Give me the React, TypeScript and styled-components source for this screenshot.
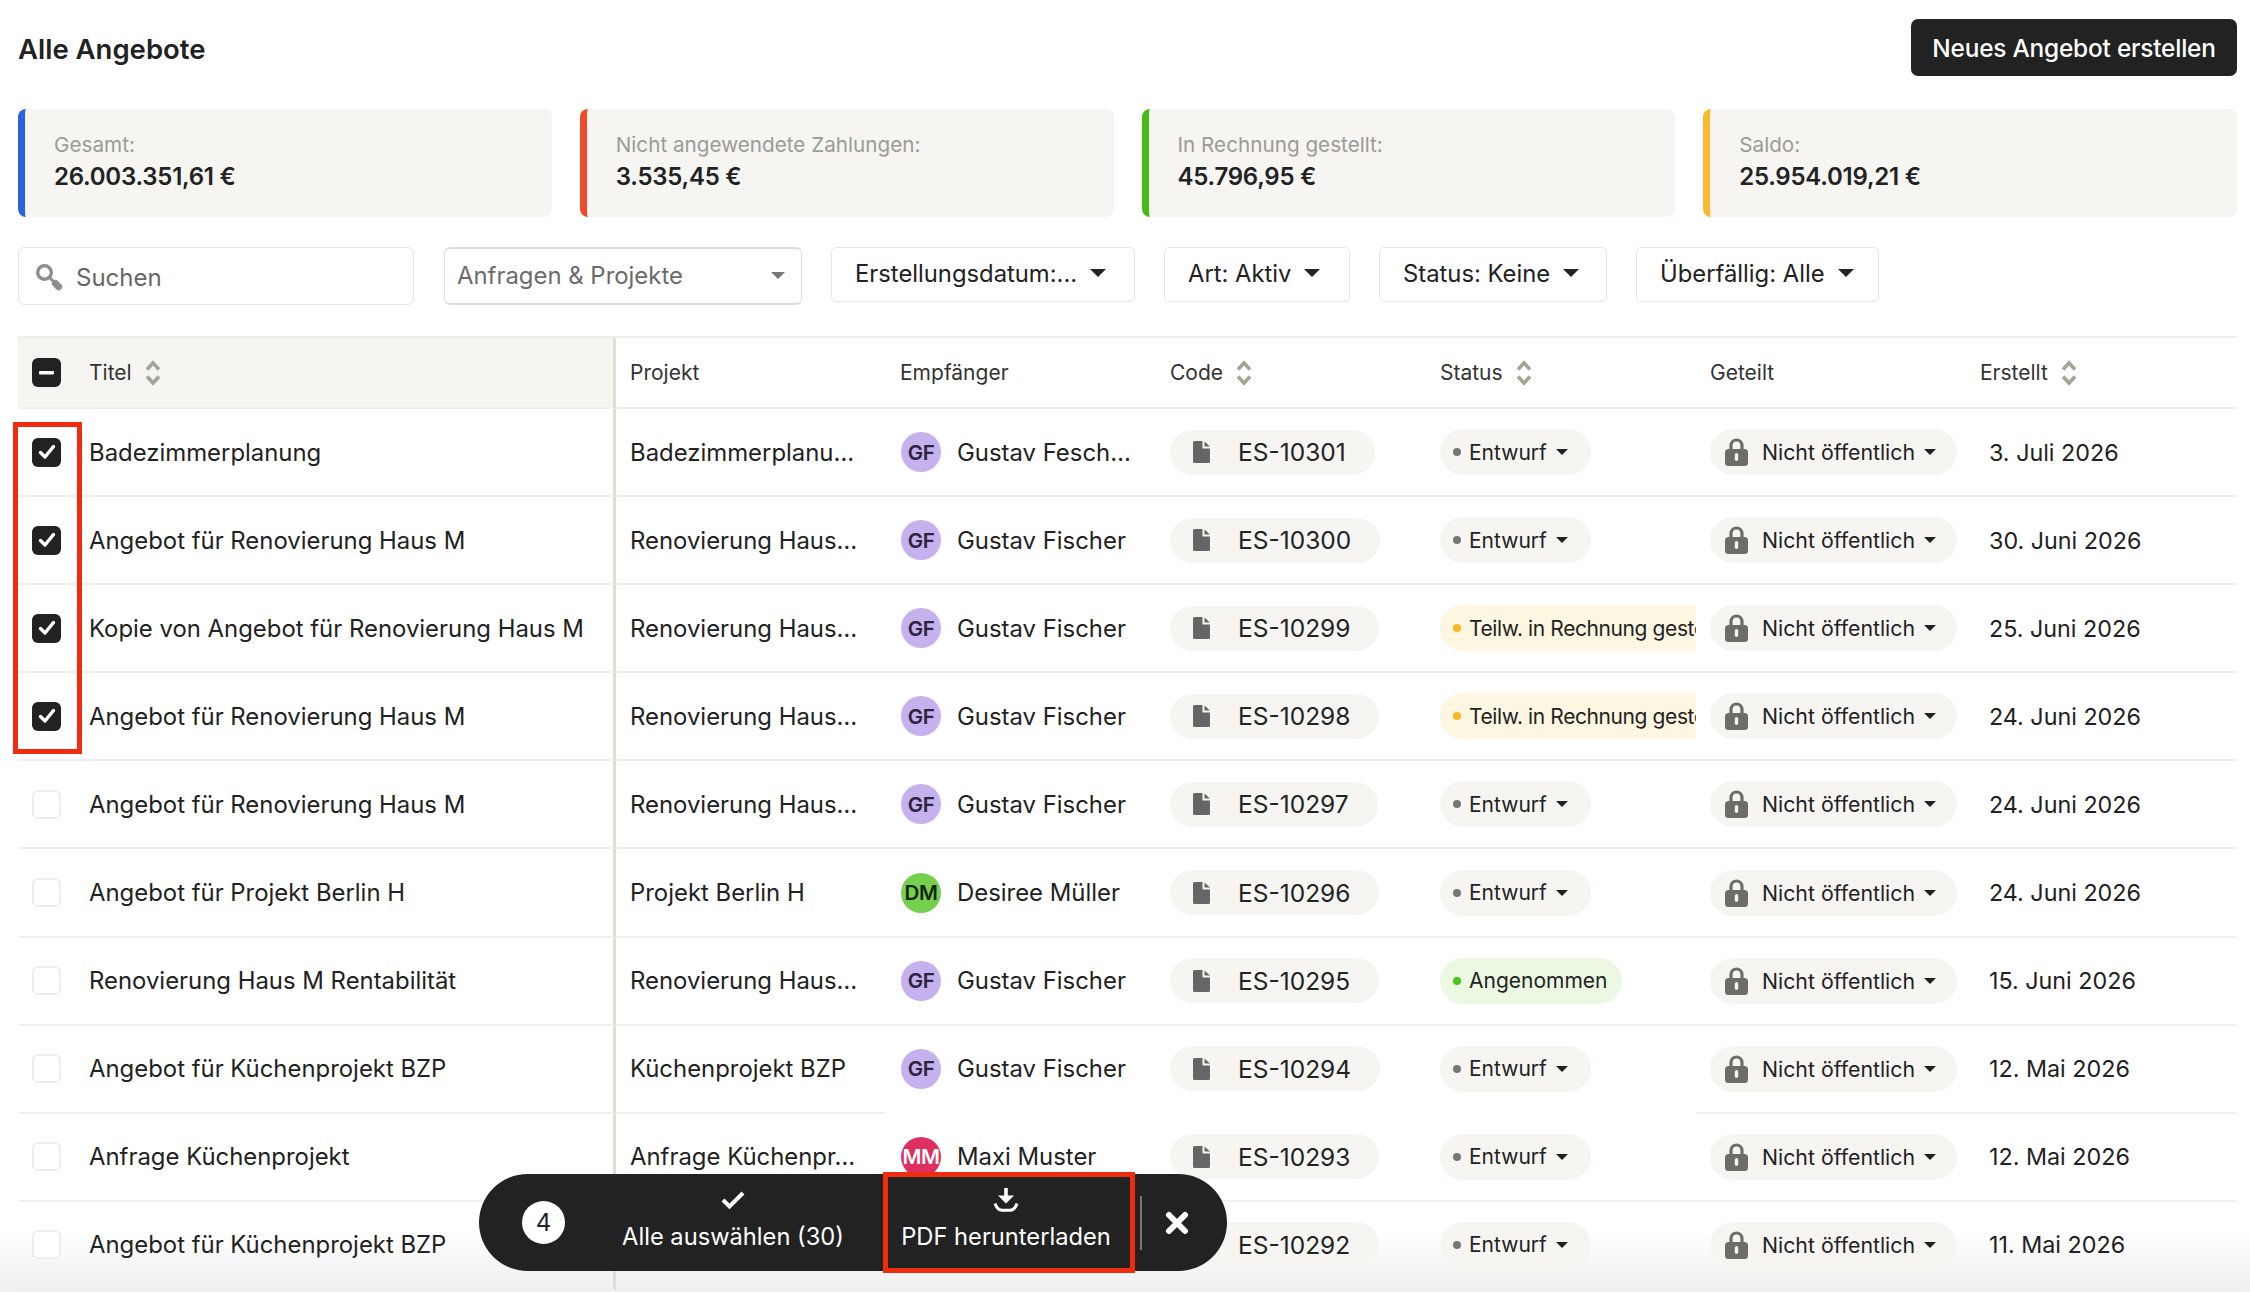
import React, { FC } from 'react'
import styled, { createGlobalStyle } from 'styled-components'

const GlobalStyle = createGlobalStyle`
  html, body {
    margin: 0;
    height: 1292px;
    overflow: hidden;
    background: #fff;
    font-family: 'Inter', 'Liberation Sans', sans-serif;
    color: #222;
  }
`

const Page = styled.div`
  position: relative;
  width: 2250px;
  height: 1292px;
  padding: 19px 13px 0 18px;
  box-sizing: border-box;
  overflow: hidden;
`
const Header = styled.header`
  display: flex;
  justify-content: space-between;
  align-items: center;
  height: 57px;
`
const Title = styled.h1`
  margin: 0;
  padding-top: 3px;
  font-size: 27.5px;
  font-weight: 600;
`
const PrimaryButton = styled.button`
  width: 326px;
  height: 57px;
  border: 0;
  border-radius: 7px;
  background: #222;
  color: #fff;
  font: 500 24.4px 'Inter', sans-serif;
  letter-spacing: -0.2px;
`
const Summary = styled.section`
  display: grid;
  grid-template-columns: repeat(4, 1fr);
  column-gap: 28px;
  margin-top: 33px;
`
const SummaryCard = styled.div<{ $accent: string }>`
  height: 108px;
  box-sizing: border-box;
  padding: 22px 0 0 29px;
  border-left: 7px solid ${(p) => p.$accent};
  border-radius: 8px;
  background: #f6f5f2;
`
const SummaryLabel = styled.div`
  font-size: 20.7px;
  line-height: 28px;
  color: #9b9b95;
`
const SummaryValue = styled.div`
  margin-top: 3px;
  font-size: 24px;
  line-height: 30px;
  font-weight: 600;
  letter-spacing: -0.25px;
`
const Filters = styled.section`
  display: flex;
  align-items: flex-start;
  margin-top: 30px;
  height: 58px;
`
const SearchBox = styled.div`
  display: flex;
  align-items: center;
  width: 396px;
  height: 58px;
  box-sizing: border-box;
  padding: 3px 0 0 17px;
  border: 1px solid #e3e2dc;
  border-radius: 6px;
  font-size: 24px;
  color: #666;
  svg {
    margin-right: 13px;
  }
`
const SelectBox = styled.div`
  display: flex;
  align-items: center;
  justify-content: space-between;
  width: 358px;
  height: 58px;
  box-sizing: border-box;
  margin-left: 30px;
  padding: 0 16px 1px 12px;
  border: 1px solid #dfded8;
  border-top-width: 2px;
  border-bottom-width: 2px;
  border-radius: 6px;
  font-size: 23.9px;
  color: #6b6b6b;
`
const FilterButton = styled.div<{ $width: number }>`
  display: flex;
  align-items: center;
  gap: 13px;
  width: ${(p) => p.$width}px;
  height: 55px;
  box-sizing: border-box;
  margin-left: 29px;
  padding: 0 0 3px 23px;
  border: 1px solid #e8e7e2;
  border-radius: 5px;
  font-size: 23.8px;
  color: #222;
  white-space: nowrap;
`
const Table = styled.section`
  position: relative;
  z-index: 1;
  margin-top: 31px;
  border-top: 2px solid #eeeeea;
`
const Row = styled.div<{ $height?: number }>`
  display: grid;
  grid-template-columns: 598px repeat(5, 270px) 271px;
  height: ${(p) => p.$height ?? 88.1}px;
`
const Cell = styled.div<{ $noLine?: boolean }>`
  display: flex;
  align-items: center;
  min-width: 0;
  box-sizing: border-box;
  padding-left: 14px;
  border-bottom: 2px solid ${(p) => (p.$noLine ? 'transparent' : '#f0efeb')};
  font-size: 23.9px;
  white-space: nowrap;
`
const TitleCell = styled(Cell)<{ $head?: boolean }>`
  border-right: 3px solid #deded4;
  background: ${(p) => (p.$head ? '#f6f5f2' : 'transparent')};
`
const HeadCell = styled(Cell)`
  font-size: 21px;
  color: #333;
`
const HeadLabel = styled.span`
  font-size: 21px;
  color: #333;
`
const DateCell = styled(Cell)`
  padding-left: 23px;
  font-size: 23.3px;
`
const Check = styled.span<{ $on?: boolean }>`
  display: inline-flex;
  align-items: center;
  justify-content: center;
  flex: none;
  width: 29px;
  height: 29px;
  box-sizing: border-box;
  margin-right: 28px;
  border-radius: 6px;
  background: ${(p) => (p.$on ? '#222' : '#fff')};
  border: ${(p) => (p.$on ? '0' : '2px solid #efeee9')};
`
const Avatar = styled.span<{ $bg: string; $fg: string }>`
  display: inline-flex;
  align-items: center;
  justify-content: center;
  flex: none;
  width: 40px;
  height: 40px;
  margin: 0 16px 0 1px;
  border-radius: 50%;
  background: ${(p) => p.$bg};
  color: ${(p) => p.$fg};
  font-size: 20.5px;
  font-weight: 600;
  letter-spacing: -0.4px;
`
const CodePill = styled.span`
  display: inline-flex;
  align-items: center;
  height: 45px;
  padding: 0 29px 0 23px;
  border-radius: 23px;
  background: #f6f5f2;
  font-size: 24.5px;
  svg {
    margin-right: 28px;
  }
`
const StatusClip = styled.span`
  display: inline-flex;
  max-width: 256px;
  overflow: hidden;
`
const StatusPill = styled.span<{ $bg: string; $end: number; $spacing: number }>`
  display: inline-flex;
  align-items: center;
  flex: none;
  height: 46px;
  padding: 0 ${(p) => p.$end}px 0 13px;
  border-radius: 23px;
  background: ${(p) => p.$bg};
  font-size: 21px;
  letter-spacing: ${(p) => p.$spacing}px;
`
const Dot = styled.span<{ $color: string }>`
  flex: none;
  width: 8px;
  height: 8px;
  margin-right: 8px;
  border-radius: 50%;
  background: ${(p) => p.$color};
`
const SharePill = styled.span`
  display: inline-flex;
  align-items: center;
  height: 46px;
  padding: 0 21px 0 15px;
  border-radius: 23px;
  background: #f6f5f2;
  font-size: 21.3px;
  svg:first-child {
    margin-right: 14px;
  }
`
const Caret = styled.span<{ $color?: string; $size?: number }>`
  flex: none;
  display: inline-block;
  border-left: ${(p) => p.$size ?? 8}px solid transparent;
  border-right: ${(p) => p.$size ?? 8}px solid transparent;
  border-top: ${(p) => p.$size ?? 8}px solid ${(p) => p.$color ?? '#222'};
`
const SmallCaret = styled(Caret)`
  margin-left: 9px;
`
const SortIcon = styled.svg`
  margin-left: 13px;
`
const Fade = styled.div`
  position: absolute;
  left: 0;
  right: 0;
  bottom: 0;
  height: 62px;
  background: linear-gradient(rgba(238, 238, 238, 0), #efefef);
  pointer-events: none;
`
const Marker = styled.div`
  position: absolute;
  z-index: 2;
  left: 13px;
  top: 422px;
  width: 69px;
  height: 332px;
  box-sizing: border-box;
  border: 5px solid #f02c0e;
`
const ActionBar = styled.div`
  position: absolute;
  z-index: 2;
  left: 479px;
  top: 1174px;
  width: 748px;
  height: 97px;
  display: flex;
  align-items: center;
  border-radius: 49px;
  background: #222;
  color: #fff;
`
const Count = styled.span`
  display: flex;
  align-items: center;
  justify-content: center;
  width: 43px;
  height: 43px;
  margin-left: 43px;
  border-radius: 50%;
  background: #fff;
  color: #222;
  font-size: 24px;
`
const BarAction = styled.div<{ $width: number; $left: number; $marked?: boolean }>`
  display: flex;
  flex-direction: column;
  align-items: center;
  box-sizing: border-box;
  width: ${(p) => p.$width}px;
  height: 101px;
  margin-left: ${(p) => p.$left}px;
  padding: 11px ${(p) => (p.$marked ? 6 : 0)}px 0 0;
  font-size: 23.7px;
  white-space: nowrap;
  border: 5px solid ${(p) => (p.$marked ? '#f02c0e' : 'transparent')};
  svg {
    height: 24px;
    margin-bottom: 10px;
  }
`
const BarDivider = styled.span`
  width: 2px;
  height: 54px;
  margin-left: 5px;
  background: #777;
`
const CloseButton = styled.span`
  display: flex;
  margin-left: 23px;
`

const SortArrows: FC = () => (
  <SortIcon width="16" height="26" viewBox="0 0 16 26" fill="none" stroke="#a5a596" strokeWidth="3.6">
    <path d="M2 9.5 8 3l6 6.5M2 16.5 8 23l6-6.5" />
  </SortIcon>
)

const CheckMark: FC = () => (
  <svg width="18" height="16" viewBox="0 0 18 16" fill="none" stroke="#fff" strokeWidth="3.4" strokeLinecap="round" strokeLinejoin="round">
    <path d="M2.5 8.5 7 13l8.5-10.5" />
  </svg>
)

const FileIcon: FC = () => (
  <svg width="17" height="22" viewBox="0 0 17 22" fill="#666">
    <path d="M1.5 0H9.5v7.5H17v13A1.5 1.5 0 0 1 15.5 22h-14A1.5 1.5 0 0 1 0 20.5v-19A1.5 1.5 0 0 1 1.5 0Z" />
    <path d="M11.5 0.5 17 5.500h-5.500Z" />
  </svg>
)

const LockIcon: FC = () => (
  <svg width="23" height="28" viewBox="0 0 23 28" fill="none">
    <path d="M6 13V7.500a5.500 5.500 0 0 1 11 0V13" stroke="#6c6c68" strokeWidth="3.2" />
    <rect y="11" width="23" height="17" rx="3.5" fill="#6c6c68" />
    <rect x="9.8" y="15" width="3.4" height="8" rx="1.7" fill="#f6f5f2" />
  </svg>
)

const SearchIcon: FC = () => (
  <svg width="27" height="27" viewBox="0 0 27 27" fill="none" stroke="#8e8e8e" strokeLinecap="round">
    <circle cx="8.5" cy="8.5" r="6.8" strokeWidth="3.4" />
    <path d="M13.5 13.5l4 4" strokeWidth="3" />
    <path d="M19.5 19.5l3.2 3.2" strokeWidth="7" />
  </svg>
)

const rows = [
  { title: 'Badezimmerplanung', project: 'Badezimmerplanu…', person: 'Gustav Fesch…', code: 'ES-10301', status: 'draft', date: '3. Juli 2026', on: true },
  { title: 'Angebot für Renovierung Haus M', project: 'Renovierung Haus…', person: 'Gustav Fischer', code: 'ES-10300', status: 'draft', date: '30. Juni 2026', on: true },
  { title: 'Kopie von Angebot für Renovierung Haus M', project: 'Renovierung Haus…', person: 'Gustav Fischer', code: 'ES-10299', status: 'partial', date: '25. Juni 2026', on: true },
  { title: 'Angebot für Renovierung Haus M', project: 'Renovierung Haus…', person: 'Gustav Fischer', code: 'ES-10298', status: 'partial', date: '24. Juni 2026', on: true },
  { title: 'Angebot für Renovierung Haus M', project: 'Renovierung Haus…', person: 'Gustav Fischer', code: 'ES-10297', status: 'draft', date: '24. Juni 2026' },
  { title: 'Angebot für Projekt Berlin H', project: 'Projekt Berlin H', person: 'Desiree Müller', code: 'ES-10296', status: 'draft', date: '24. Juni 2026' },
  { title: 'Renovierung Haus M Rentabilität', project: 'Renovierung Haus…', person: 'Gustav Fischer', code: 'ES-10295', status: 'accepted', date: '15. Juni 2026' },
  { title: 'Angebot für Küchenprojekt BZP', project: 'Küchenprojekt BZP', person: 'Gustav Fischer', code: 'ES-10294', status: 'draft', date: '12. Mai 2026', gap: true },
  { title: 'Anfrage Küchenprojekt', project: 'Anfrage Küchenpr…', person: 'Maxi Muster', code: 'ES-10293', status: 'draft', date: '12. Mai 2026' },
  { title: 'Angebot für Küchenprojekt BZP', project: '', person: '', code: 'ES-10292', status: 'draft', date: '11. Mai 2026' }
]

const statuses: Record<string, { label: string; bg: string; dot: string; caret: boolean; spacing: number }> = {
  draft: { label: 'Entwurf', bg: '#f6f5f2', dot: '#777', caret: true, spacing: 0 },
  partial: { label: 'Teilw. in Rechnung gestellt', bg: '#fdf6e0', dot: '#fbb827', caret: true, spacing: -0.4 },
  accepted: { label: 'Angenommen', bg: '#ebf9e3', dot: '#4cc21a', caret: false, spacing: 0 }
}

const avatarFor = (person: string) => {
  if (person.startsWith('Desiree')) return { bg: '#76d04e', fg: '#16260e', text: 'DM' }
  if (person.startsWith('Maxi')) return { bg: '#de2f60', fg: '#fff', text: 'MM' }
  return { bg: '#c6b1ef', fg: '#29243c', text: 'GF' }
}

const summary = [
  { label: 'Gesamt:', value: '26.003.351,61 €', accent: '#2b62e3' },
  { label: 'Nicht angewendete Zahlungen:', value: '3.535,45 €', accent: '#f0492b' },
  { label: 'In Rechnung gestellt:', value: '45.796,95 €', accent: '#46bd17' },
  { label: 'Saldo:', value: '25.954.019,21 €', accent: '#fbb92d' }
]

export default function App() {
  return (
    <Page>
      <GlobalStyle />
      <Header>
        <Title>Alle Angebote</Title>
        <PrimaryButton>Neues Angebot erstellen</PrimaryButton>
      </Header>
      <Summary>
        {summary.map((item) => (
          <SummaryCard key={item.label} $accent={item.accent}>
            <SummaryLabel>{item.label}</SummaryLabel>
            <SummaryValue>{item.value}</SummaryValue>
          </SummaryCard>
        ))}
      </Summary>
      <Filters>
        <SearchBox>
          <SearchIcon />
          Suchen
        </SearchBox>
        <SelectBox>
          Anfragen &amp; Projekte
          <Caret $color="#777" $size={7.5} />
        </SelectBox>
        <FilterButton $width={304}>
          Erstellungsdatum:...
          <Caret />
        </FilterButton>
        <FilterButton $width={186}>
          Art: Aktiv
          <Caret />
        </FilterButton>
        <FilterButton $width={228}>
          Status: Keine
          <Caret />
        </FilterButton>
        <FilterButton $width={243}>
          Überfällig: Alle
          <Caret />
        </FilterButton>
      </Filters>
      <Table>
        <Row $height={71}>
          <TitleCell $head>
            <Check $on>
              <svg width="15" height="4" viewBox="0 0 15 4">
                <rect width="15" height="3.4" rx="1" fill="#fff" />
              </svg>
            </Check>
            <HeadLabel>Titel</HeadLabel>
            <SortArrows />
          </TitleCell>
          <HeadCell>Projekt</HeadCell>
          <HeadCell>Empfänger</HeadCell>
          <HeadCell>
            Code
            <SortArrows />
          </HeadCell>
          <HeadCell>
            Status
            <SortArrows />
          </HeadCell>
          <HeadCell>Geteilt</HeadCell>
          <HeadCell>
            Erstellt
            <SortArrows />
          </HeadCell>
        </Row>
        {rows.map((row) => {
          const status = statuses[row.status]
          const avatar = avatarFor(row.person)
          return (
            <Row key={row.code}>
              <TitleCell>
                <Check $on={row.on}>{row.on && <CheckMark />}</Check>
                {row.title}
              </TitleCell>
              <Cell>{row.project}</Cell>
              <Cell $noLine={row.gap}>
                {row.person && (
                  <>
                    <Avatar $bg={avatar.bg} $fg={avatar.fg}>
                      {avatar.text}
                    </Avatar>
                    {row.person}
                  </>
                )}
              </Cell>
              <Cell $noLine={row.gap}>
                <CodePill>
                  <FileIcon />
                  {row.code}
                </CodePill>
              </Cell>
              <Cell $noLine={row.gap}>
                <StatusClip>
                  <StatusPill $bg={status.bg} $end={status.caret ? 23 : 15} $spacing={status.spacing}>
                    <Dot $color={status.dot} />
                    {status.label}
                    {status.caret && <SmallCaret $size={6.5} />}
                  </StatusPill>
                </StatusClip>
              </Cell>
              <Cell>
                <SharePill>
                  <LockIcon />
                  Nicht öffentlich
                  <SmallCaret $size={6.5} />
                </SharePill>
              </Cell>
              <DateCell>{row.date}</DateCell>
            </Row>
          )
        })}
      </Table>
      <Fade />
      <Marker />
      <ActionBar>
        <Count>4</Count>
        <BarAction $width={240} $left={48}>
          <svg width="24" height="24" viewBox="0 0 24 24" fill="none" stroke="#fff" strokeWidth="4">
            <path d="M2 12l6.5 6.5L22 5" />
          </svg>
          Alle auswählen (30)
        </BarAction>
        <BarAction $width={252} $left={30} $marked>
          <svg width="26" height="24" viewBox="0 0 26 24" fill="none">
            <path d="M11.2 0h3.600v7.500H21L13 15.500 5 7.500h6.200Z" fill="#fff" />
            <path d="M2 15.500C3.500 20 6 22.200 9 22.200h8c3 0 5.500-2.200 7-6.700" stroke="#fff" strokeWidth="3" />
          </svg>
          PDF herunterladen
        </BarAction>
        <BarDivider />
        <CloseButton>
          <svg width="24" height="24" viewBox="0 0 24 24" fill="none" stroke="#fff" strokeWidth="6" strokeLinecap="round">
            <path d="M4 4l16 16M20 4 4 20" />
          </svg>
        </CloseButton>
      </ActionBar>
    </Page>
  )
}
